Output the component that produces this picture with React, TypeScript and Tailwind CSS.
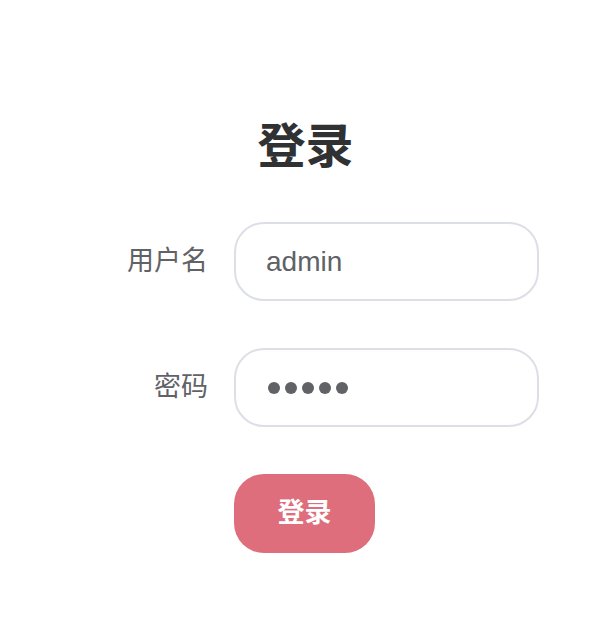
import React from "react";

const font = { fontFamily: '"Liberation Sans", "Noto Sans CJK SC", sans-serif' };

export default function App() {
  return (
    <div className="w-[615px] h-[618px] bg-white" style={font}>
      <div className="pt-[117px] flex flex-col">
        <h1 className="w-full text-center pr-[4px] text-[48px] leading-[60px] font-bold text-[#303133]">
          登录
        </h1>
        <div className="mt-[45px] flex flex-col gap-[47px]">
          <div className="flex items-center">
            <label className="w-[208px] text-right text-[27px] text-[#606266]">用户名</label>
            <div className="ml-[26px] w-[305px] h-[79px] rounded-[30px] border-2 border-[#dcdfe6] flex items-center pl-[30px]">
              <span className="text-[28px] text-[#606266]">admin</span>
            </div>
          </div>
          <div className="flex items-center">
            <label className="w-[208px] text-right text-[27px] text-[#606266]">密码</label>
            <div className="ml-[26px] w-[305px] h-[79px] rounded-[30px] border-2 border-[#dcdfe6] flex items-center pl-[32px] gap-[5px]">
              <div className="w-[12px] h-[12px] rounded-full bg-[#606266]" />
              <div className="w-[12px] h-[12px] rounded-full bg-[#606266]" />
              <div className="w-[12px] h-[12px] rounded-full bg-[#606266]" />
              <div className="w-[12px] h-[12px] rounded-full bg-[#606266]" />
              <div className="w-[12px] h-[12px] rounded-full bg-[#606266]" />
            </div>
          </div>
          <div className="flex">
            <button className="ml-[234px] w-[141px] h-[79px] rounded-[30px] bg-[#de6e7b] text-white text-[27px] font-bold">
              登录
            </button>
          </div>
        </div>
      </div>
    </div>
  );
}
